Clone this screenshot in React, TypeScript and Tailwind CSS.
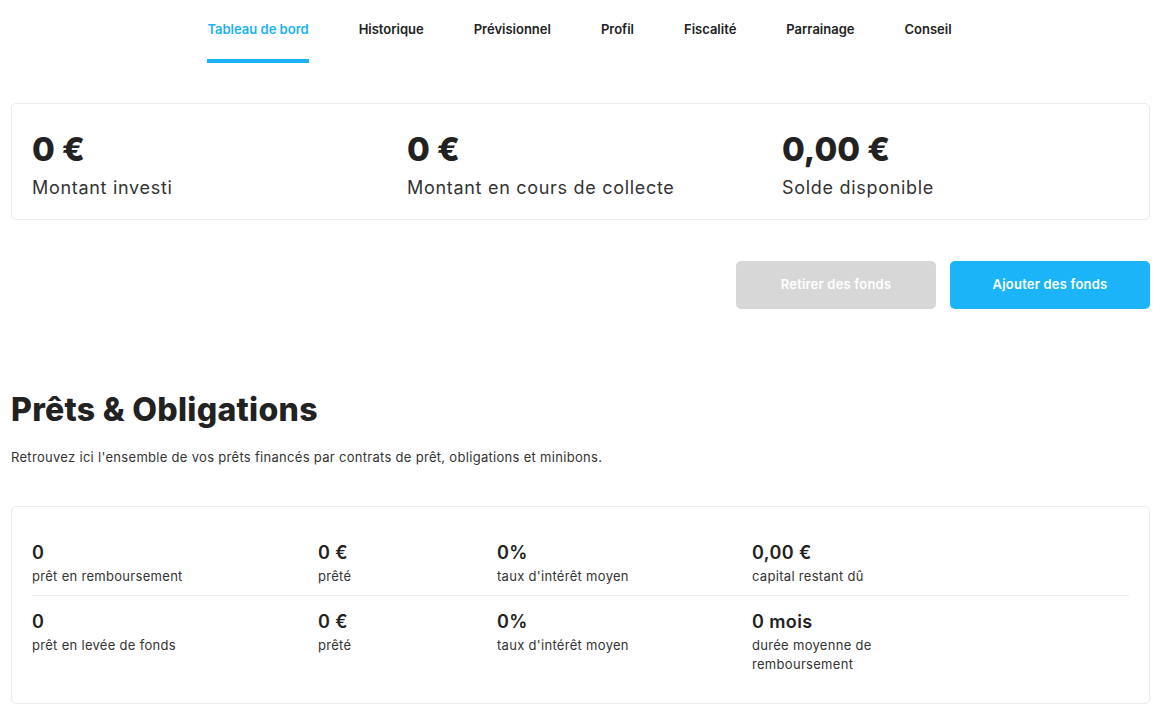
import React from "react";

const tabs = ["Tableau de bord", "Historique", "Prévisionnel", "Profil", "Fiscalité", "Parrainage", "Conseil"];

const summary = [
  { value: "0 €", label: "Montant investi" },
  { value: "0 €", label: "Montant en cours de collecte" },
  { value: "0,00 €", label: "Solde disponible" },
];

const rows = [
  [
    { value: "0", label: "prêt en remboursement" },
    { value: "0 €", label: "prêté" },
    { value: "0%", label: "taux d'intérêt moyen" },
    { value: "0,00 €", label: "capital restant dû" },
  ],
  [
    { value: "0", label: "prêt en levée de fonds" },
    { value: "0 €", label: "prêté" },
    { value: "0%", label: "taux d'intérêt moyen" },
    { value: "0 mois", label: "durée moyenne de remboursement" },
  ],
];

function Stat({ value, label, width }: { value: string; label: string; width: string }) {
  return (
    <div className={width}>
      <div className="text-[18px] font-semibold leading-[22px] tracking-[0.4px] text-[#222]">{value}</div>
      <div className="mt-[3px] text-[13px] leading-[19px] tracking-[0.3px] text-[#333]">{label}</div>
    </div>
  );
}

export default function App() {
  const widths = ["w-[286px]", "w-[179px]", "w-[255px]", "w-[120px]"];

  return (
    <div className="min-h-screen bg-white font-['Inter',sans-serif] text-[#222]">
      <nav className="flex justify-center gap-[50px] pt-[20px] pl-[3px]">
        {tabs.map((t, i) => (
          <div key={t} className="flex flex-col">
            <span className={`text-[13px] font-semibold leading-[18px] ${i === 0 ? "text-[#1bb2f5]" : "text-[#222]"}`}>{t}</span>
            <span className={`mt-[21px] h-[4px] ${i === 0 ? "bg-[#1bb2f5]" : "bg-transparent"}`} />
          </div>
        ))}
      </nav>

      <div className="px-[11px] pr-[6px]">
        <div className="mt-[40px] flex rounded-[5px] border border-[#ebebeb] px-[20px] pt-[25px] pb-[18px]">
          {summary.map((s, i) => (
            <div key={i} className={i < 2 ? "w-[375px]" : "flex-1"}>
              <div className="text-[33px] font-extrabold leading-[40px] text-[#222]">{s.value}</div>
              <div className="mt-[6px] text-[18px] leading-[26px] tracking-[0.7px] text-[#333]">{s.label}</div>
            </div>
          ))}
        </div>

        <div className="mt-[41px] flex justify-end gap-[14px]">
          <button className="h-[48px] w-[200px] rounded-[5px] bg-[#d7d7d7] text-[13px] font-semibold tracking-[0.2px] text-white">Retirer des fonds</button>
          <button className="h-[48px] w-[200px] rounded-[5px] bg-[#1bb4f8] text-[13px] font-semibold tracking-[0.2px] text-white">Ajouter des fonds</button>
        </div>

        <h1 className="mt-[81px] text-[32px] font-extrabold leading-[40px] tracking-[0.3px] text-[#222]">Prêts &amp; Obligations</h1>
        <p className="mt-[18px] text-[13px] leading-[18px] tracking-[0.3px] text-[#333]">
          Retrouvez ici l'ensemble de vos prêts financés par contrats de prêt, obligations et minibons.
        </p>

        <div className="mt-[40px] rounded-[5px] border border-[#ebebeb] px-[20px] pt-[35px] pb-[29px]">
          {rows.map((row, ri) => (
            <div key={ri} className={ri === 0 ? "flex border-b border-[#ebebeb] pb-[9px]" : "flex pt-[15px]"}>
              {row.map((c, ci) => (
                <Stat key={ci} value={c.value} label={c.label} width={widths[ci]} />
              ))}
            </div>
          ))}
        </div>
      </div>
    </div>
  );
}
